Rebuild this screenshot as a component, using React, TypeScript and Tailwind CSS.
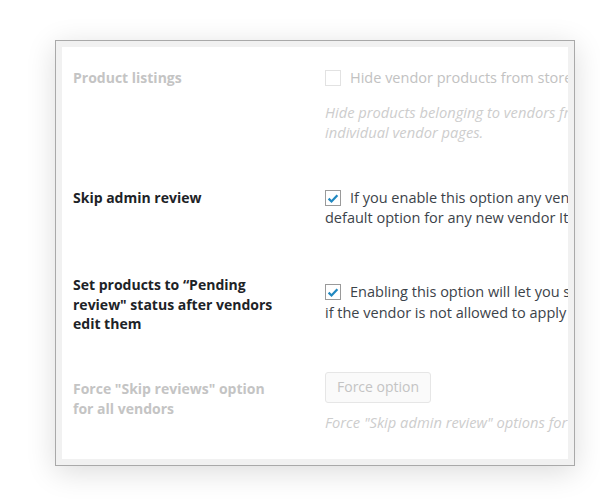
import React from "react";

function Check({ checked, disabled }: { checked?: boolean; disabled?: boolean }) {
  return (
    <span
      className={
        "inline-flex h-4 w-4 shrink-0 items-center justify-center border bg-white " +
        (disabled ? "border-[#e2e2e2]" : "border-[#9a9a9a]")
      }
    >
      {checked && (
        <svg viewBox="0 0 16 16" className="h-[15px] w-[15px]">
          <path d="M3 8.2 L6.3 11.4 L13 4.2" fill="none" stroke="#2188c0" strokeWidth="2.6" strokeLinejoin="miter" />
        </svg>
      )}
    </span>
  );
}

export default function App() {
  return (
    <div className="h-[502px] w-[600px] overflow-hidden bg-white pl-[55px] pt-[40px] font-['Open_Sans','Noto_Sans',sans-serif] text-[14px] leading-[20px]">
      <div className="h-[426px] w-[520px] border border-[#a9a9a9] bg-[#f1f1f1] p-[6px] shadow-[0_6px_28px_rgba(0,0,0,0.14)]">
        <div className="h-full w-full overflow-hidden bg-white pl-[11px]">
          {/* Product listings (disabled) */}
          <div className="flex pt-[21px]">
            <div className="w-[252px] shrink-0 font-bold text-[#c4c4c4]">Product listings</div>
            <div className="shrink-0 whitespace-nowrap text-[14.5px]">
              <div className="flex items-center gap-[9px] text-[#c2c2c2]">
                <Check disabled />
                <span>Hide vendor products from store and shop pages</span>
              </div>
              <div className="mt-[14px] text-[14.7px] italic text-[#cdcdcd]">
                <div>Hide products belonging to vendors from the shop page, showing them only on</div>
                <div>individual vendor pages.</div>
              </div>
            </div>
          </div>

          {/* Skip admin review */}
          <div className="flex pt-[46px]">
            <div className="w-[252px] shrink-0 font-bold text-[#1d2327]">Skip admin review</div>
            <div className="shrink-0 whitespace-nowrap text-[14.5px] text-[#3c434a]">
              <div className="flex items-center gap-[9px]">
                <Check checked />
                <span>If you enable this option any vendor will be able to publish products directly. This is the</span>
              </div>
              <div>default option for any new vendor It can be changed for each vendor.</div>
            </div>
          </div>

          {/* Pending review */}
          <div className="flex pt-[47px]">
            <div className="w-[252px] shrink-0 pr-[40px] font-bold leading-[19.5px] text-[#1d2327]">
              Set products to “Pending review" status after vendors edit them
            </div>
            <div className="shrink-0 whitespace-nowrap pt-[7px] text-[14.5px] text-[#3c434a]">
              <div className="flex items-center gap-[9px]">
                <Check checked />
                <span>Enabling this option will let you set products to "Pending review" after editing,</span>
              </div>
              <div className="mt-[1px]">if the vendor is not allowed to apply the "Skip admin review" option.</div>
            </div>
          </div>

          {/* Force skip reviews (disabled) */}
          <div className="flex pt-[38px]">
            <div className="w-[252px] shrink-0 pr-[40px] pt-[7px] font-bold text-[#c4c4c4]">
              Force "Skip reviews" option for all vendors
            </div>
            <div className="shrink-0 whitespace-nowrap">
              <button className="h-[31px] rounded-[3px] border border-[#e6e6e6] bg-[#fafafa] px-[11px] text-[#c4c4c4]">
                Force option
              </button>
              <div className="mt-[9px] text-[14.7px] italic text-[#cdcdcd]">
                Force "Skip admin review" options for all vendors in the store.
              </div>
            </div>
          </div>
        </div>
      </div>
    </div>
  );
}
